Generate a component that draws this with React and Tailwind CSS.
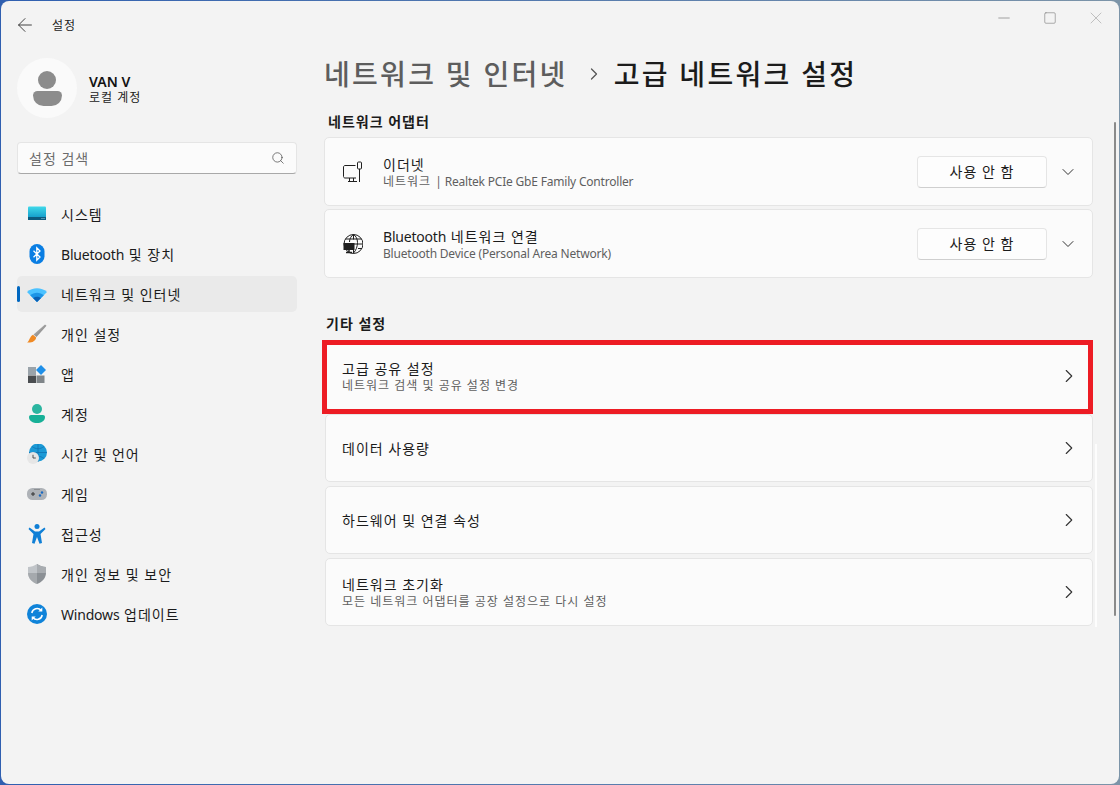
import { ArrowLeft, ChevronDown, ChevronRight, Minus, Search, Square, X } from "lucide-react";

// hangul runs sit wider than the installed font, latin a bit narrower
const T = ({ children }) =>
  children.split(/([가-힣 ]+)/).map((run, i) =>
    /[가-힣]/.test(run) ? (
      <span key={i} className="tracking-[1px]">{run}</span>
    ) : (
      <span key={i} className="tracking-[-0.2px]">{run}</span>
    )
  );

const IconSystem = () => (
  <svg width="20" height="20" viewBox="0 0 20 20">
    <defs>
      <linearGradient id="sys" x1="0" y1="0" x2="0" y2="1">
        <stop offset="0" stopColor="#3fd9ea" />
        <stop offset="1" stopColor="#0b8fc4" />
      </linearGradient>
    </defs>
    <rect x="1" y="2.5" width="18" height="13.5" rx="1" fill="url(#sys)" />
    <rect x="1" y="13" width="18" height="3" fill="#0c5a7f" />
    <rect x="14.5" y="14" width="1" height="1" fill="#8fd0e6" />
    <rect x="16.5" y="14" width="1" height="1" fill="#8fd0e6" />
  </svg>
);

const IconBluetooth = () => (
  <svg width="20" height="20" viewBox="0 0 20 20">
    <rect x="2.5" y="0" width="15" height="20" rx="7.5" fill="#0a7ee3" />
    <path d="M6.5 6.8 13 13l-3.2 3.2V3.8L13 7l-6.5 6.2" fill="none" stroke="#fff" strokeWidth="1.3" />
  </svg>
);

const IconWifi = () => (
  <svg width="20" height="20" viewBox="0 -1.5 20 20">
    <path d="M0 6.5C5.5 1.5 14.5 1.5 20 6.5L10 16.5Z" fill="#4cc2ff" />
    <path d="M3.2 9.7C7 6.3 13 6.3 16.8 9.7L10 16.5Z" fill="#1d94e6" />
    <path d="M6.2 12.7C8.4 10.9 11.6 10.9 13.8 12.7L10 16.5Z" fill="#0a5fb4" />
  </svg>
);

const IconBrush = () => (
  <svg width="20" height="20" viewBox="0 0 20 20">
    <defs>
      <linearGradient id="brush" x1="0" y1="0" x2="1" y2="1">
        <stop offset="0" stopColor="#c9c9c9" />
        <stop offset="1" stopColor="#6d6d6d" />
      </linearGradient>
    </defs>
    <path d="M18 0.5 19.5 1.8 9.5 13 6.5 10.5Z" fill="url(#brush)" />
    <path d="M6 10.8 9.2 13.4C8.5 17 5 19 0 18.5 2.5 17.5 2.5 12.5 6 10.8Z" fill="#f08a24" />
  </svg>
);

const IconApps = () => (
  <svg width="20" height="20" viewBox="0 0 20 20">
    <rect x="1" y="3" width="8" height="8" fill="#9aa3aa" />
    <rect x="1" y="11.5" width="8" height="7.5" fill="#4a4d50" />
    <rect x="9.5" y="11.5" width="8" height="7.5" fill="#7f8589" />
    <path d="M14 1 19 6 14 11 9 6Z" fill="#1f8fe8" />
  </svg>
);

const IconAccount = () => (
  <svg width="20" height="20" viewBox="0 0 20 20">
    <circle cx="10" cy="5" r="5" fill="#2bb5a0" />
    <path d="M2 13c0-1.2 1-2 2-2h12c1 0 2 .8 2 2 0 4-4 6-8 6s-8-2-8-6Z" fill="#17b097" />
  </svg>
);

const IconTime = () => (
  <svg width="20" height="20" viewBox="0 0 20 20">
    <circle cx="11" cy="8.5" r="9" fill="#1c9ad6" />
    <path d="M11 0v18M2 8.5h18M5 2.5c4 3 8 3 12 0M5 14.5c4-3 8-3 12 0" stroke="#0f6fae" strokeWidth="0.7" fill="none" />
    <circle cx="6" cy="14" r="6" fill="#e6e6e6" />
    <path d="M6 10.8V14h2.8" stroke="#444" strokeWidth="0.9" fill="none" />
  </svg>
);

const IconGame = () => (
  <svg width="20" height="20" viewBox="0 0 20 20">
    <rect x="0" y="4" width="20" height="12" rx="5.5" fill="#aeb2b7" />
    <path d="M4 10h4M6 8v4" stroke="#333" strokeWidth="1" />
    <circle cx="15" cy="8.5" r="1.2" fill="#1769c2" />
    <circle cx="13" cy="11.5" r="1.2" fill="#1769c2" />
    <circle cx="8" cy="5.5" r="0.5" fill="#555" />
    <circle cx="10" cy="5.5" r="0.5" fill="#555" />
    <circle cx="12" cy="5.5" r="0.5" fill="#555" />
  </svg>
);

const IconAccess = () => (
  <svg width="20" height="20" viewBox="0 0 20 20">
    <circle cx="10" cy="2.5" r="2.5" fill="#0f7fd6" />
    <path d="M2.5 3.5 8 7.5h4l5.5-4 1 1.5L13.5 10l1.5 9-2.5.7L10 13l-2.5 6.7L5 19l1.5-9-5-5Z" fill="#0f7fd6" />
  </svg>
);

const IconShield = () => (
  <svg width="20" height="20" viewBox="0 0 20 20">
    <path d="M10 0c3 2 6 2.8 9 3v6c0 5-4 9-9 11Z" fill="#8b9095" />
    <path d="M10 0C7 2 4 2.8 1 3v6c0 5 4 9 9 11Z" fill="#c0c4c8" />
    <path d="M1 9h9v11C5 18 1 14 1 9Z" fill="#a5a9ad" />
    <path d="M10 0v9h9V3c-3-.2-6-1-9-3Z" fill="#a8acb0" />
  </svg>
);

const IconUpdate = () => (
  <svg width="20" height="20" viewBox="0 0 20 20">
    <circle cx="10" cy="10" r="10" fill="#0f83d9" />
    <path d="M4.8 9a5.4 5.4 0 0 1 9.4-2.6M15.2 11a5.4 5.4 0 0 1-9.4 2.6" fill="none" stroke="#fff" strokeWidth="1.5" />
    <path d="M15.3 3.6v4h-4ZM4.7 16.4v-4h4Z" fill="#fff" />
  </svg>
);

const IconEthernet = () => (
  <svg width="20" height="22" viewBox="0 0 20 22" fill="none" stroke="#1f1f1f" strokeWidth="1">
    <path d="M12.5 4.5H2c-.8 0-1.5.7-1.5 1.5v9.5c0 .8.7 1.5 1.5 1.5h11" />
    <path d="M5 20.5h9M6.5 17v3.5M10.5 17v3.5" />
    <rect x="14.5" y="1" width="4" height="7" rx="1" />
    <path d="M16.5 8v13" />
  </svg>
);

const IconGlobe = () => (
  <svg width="20" height="20" viewBox="0 0 20 20" fill="none" stroke="#1f1f1f" strokeWidth="1">
    <circle cx="10.5" cy="10" r="9.5" />
    <path d="M1 10h19M10.5.5v5M10.5 14v5.5M6.5 8c0-3 1.5-6 4-7.5 2.5 1.5 4 4.5 4 8 0 4-1.5 8-4 10.5M2.5 5h16M15 14.5h4" />
    <rect x="0.5" y="9" width="11" height="7" fill="#1f1f1f" stroke="none" />
    <path d="M3 18.5h6M6 16v2.5" strokeWidth="1.5" />
  </svg>
);

const navItems = [
  ["시스템", IconSystem],
  ["Bluetooth 및 장치", IconBluetooth],
  ["네트워크 및 인터넷", IconWifi],
  ["개인 설정", IconBrush],
  ["앱", IconApps],
  ["계정", IconAccount],
  ["시간 및 언어", IconTime],
  ["게임", IconGame],
  ["접근성", IconAccess],
  ["개인 정보 및 보안", IconShield],
  ["Windows 업데이트", IconUpdate],
];

function AdapterCard({ icon, title, sub }) {
  return (
    <div className="flex h-[69px] items-center rounded-[5px] border border-[#e5e5e5] bg-[#fbfbfb] pl-[18px] pr-[14px]">
      <div className="flex w-[20px] justify-center">{icon}</div>
      <div className="ml-[20px] flex-1 pt-[2px]">
        <div className="text-[14px] leading-[18px] text-[#1b1b1b]"><T>{title}</T></div>
        <div className="text-[12px] leading-[16px] text-[#5f5f5f]"><T>{sub}</T></div>
      </div>
      <button className="flex h-[32px] w-[130px] items-center justify-center rounded-[4px] border border-[#e5e5e5] border-b-[#cfcfcf] bg-[#fdfdfd] text-[14px] text-[#1b1b1b]">
        <T>사용 안 함</T>
      </button>
      <ChevronDown size={20} strokeWidth={1.2} className="ml-[11px] text-[#333]" />
    </div>
  );
}

function LinkCard({ title, sub, outlined }) {
  return (
    <div className="relative flex h-[68px] items-center rounded-[5px] border border-[#e5e5e5] bg-[#fbfbfb] pl-[16px] pr-[12px]">
      <div className="flex-1 pt-[1px]">
        <div className="text-[14px] leading-[18px] text-[#1b1b1b]"><T>{title}</T></div>
        {sub && <div className="text-[12px] leading-[16px] text-[#5f5f5f]"><T>{sub}</T></div>}
      </div>
      <ChevronRight size={22} strokeWidth={1.2} className="text-[#333]" />
      {outlined && (
        <div className="absolute -bottom-[5px] -left-[4px] -right-[1px] -top-[3px] border-[5px] border-[#ed1c24]" />
      )}
    </div>
  );
}

export default function App() {
  return (
    <div
      className="relative h-[785px] w-[1120px] overflow-hidden bg-linear-to-r from-[#2f5fb0] to-[#7c94a8] pl-[1px] pt-[1px] text-[#1b1b1b]"
      style={{ fontFamily: '"Noto Sans", "Noto Sans CJK KR", sans-serif' }}
    >
      <div className="h-[783px] w-[1118px] rounded-[8px] bg-[#f3f3f3]">
        {/* Title bar */}
        <div className="flex h-[47px] items-start">
          <div className="ml-[13px] mt-[12px] flex h-[24px] items-center">
            <ArrowLeft size={22} strokeWidth={1} className="text-[#333]" />
            <span className="ml-[16px] pt-[1px] text-[12px] leading-[16px] text-[#1b1b1b]"><T>설정</T></span>
          </div>
          <div className="ml-auto mt-[7px] flex w-[138px] items-center">
            <div className="flex w-[46px] justify-center">
              <Minus size={18} strokeWidth={0.9} className="text-[#777]" />
            </div>
            <div className="flex w-[46px] justify-center">
              <Square size={14} strokeWidth={1} className="text-[#777]" />
            </div>
            <div className="flex w-[46px] justify-center">
              <X size={20} strokeWidth={0.7} className="text-[#999]" />
            </div>
          </div>
        </div>

        <div className="flex">
          {/* Sidebar */}
          <div className="w-[323px] pl-[16px] pr-[27px]">
            <div className="mt-[10px] flex items-center">
              <div className="flex h-[60px] w-[60px] flex-col items-center justify-center rounded-full bg-[#fafafa]">
                <div className="h-[18px] w-[18px] rounded-full bg-[#8c8c8c]" />
                <div className="mt-[2px] h-[15px] w-[29px] rounded-b-[14px] rounded-t-[6px] bg-[#8c8c8c]" />
              </div>
              <div className="ml-[12px] pt-[3px]">
                <div className="text-[14px] font-semibold leading-[16px] text-[#111]">VAN V</div>
                <div className="text-[12px] leading-[16px] text-[#1b1b1b]"><T>로컬 계정</T></div>
              </div>
            </div>

            <div className="mt-[24px] flex h-[32px] items-center justify-between rounded-[4px] border border-[#e5e5e5] border-b-[#a8a8a8] bg-[#fbfbfb] pl-[11px] pr-[11px]">
              <span className="text-[14px] text-[#6b6b6b]"><T>설정 검색</T></span>
              <Search size={14} strokeWidth={1.2} className="text-[#444]" />
            </div>

            <nav className="mt-[22px] flex flex-col gap-[4px]">
              {navItems.map(([label, Icon], i) => (
                <div
                  key={label}
                  className={`relative flex h-[36px] items-center rounded-[5px] pl-[10px] ${i === 2 ? "bg-[#eaeaea]" : ""}`}
                >
                  {i === 2 && (
                    <div className="absolute left-0 top-[10px] h-[16px] w-[3px] rounded-full bg-[#0067c0]" />
                  )}
                  <Icon />
                  <span className="ml-[14px] pt-[1px] text-[14px] text-[#1b1b1b]"><T>{label}</T></span>
                </div>
              ))}
            </nav>
          </div>

          {/* Main content */}
          <div className="w-[769px]">
            <div className="flex h-[50px] items-center pt-[2px] text-[28px] font-medium tracking-[2.3px]">
              <span className="text-[#5d5d5d]">네트워크 및 인터넷</span>
              <ChevronRight size={20} strokeWidth={1.5} className="ml-[16px] mr-[10px] text-[#555]" />
              <span className="text-[#1b1b1b]">고급 네트워크 설정</span>
            </div>

            <div className="mt-[14px] pl-[4px] text-[14px] font-semibold leading-[20px]"><T>네트워크 어댑터</T></div>
            <div className="mt-[5px] flex flex-col gap-[3px]">
              <AdapterCard
                icon={<IconEthernet />}
                title="이더넷"
                sub="네트워크 | Realtek PCIe GbE Family Controller"
              />
              <AdapterCard
                icon={<IconGlobe />}
                title="Bluetooth 네트워크 연결"
                sub="Bluetooth Device (Personal Area Network)"
              />
            </div>

            <div className="mt-[36px] pl-[2px] text-[14px] font-semibold leading-[20px]"><T>기타 설정</T></div>
            <div className="ml-[1px] mt-[8px] flex flex-col gap-[4px]">
              <LinkCard title="고급 공유 설정" sub="네트워크 검색 및 공유 설정 변경" outlined />
              <LinkCard title="데이터 사용량" />
              <LinkCard title="하드웨어 및 연결 속성" />
              <LinkCard title="네트워크 초기화" sub="모든 네트워크 어댑터를 공장 설정으로 다시 설정" />
            </div>
          </div>
        </div>
      </div>

      {/* Scrollbar */}
      <div className="absolute left-[1114px] top-[122px] h-[494px] w-[2px] rounded-full bg-[#8a8a8a]" />
      <div className="absolute left-[1095px] top-[444px] h-[183px] w-[2px] bg-[#fdfdfd]" />
    </div>
  );
}
